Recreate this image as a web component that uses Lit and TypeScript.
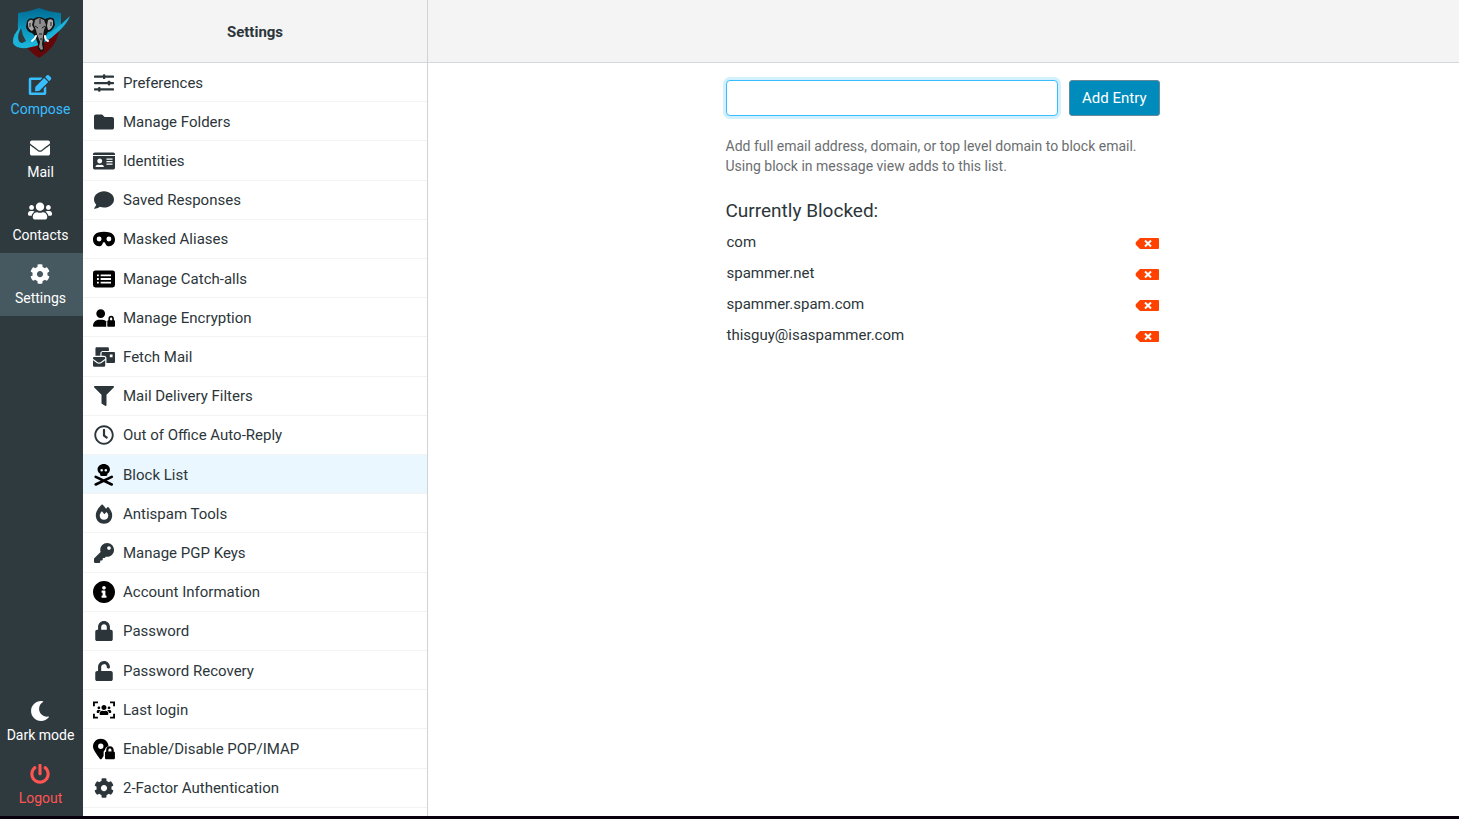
import { LitElement, html, css, svg, SVGTemplateResult } from "lit";
import { customElement, property, state } from "lit/decorators.js";
import { classMap } from "lit/directives/class-map.js";

interface Glyph {
  box: string;
  body: SVGTemplateResult;
}

const solid = (box: string, d: string): Glyph => ({
  box,
  body: svg`<path fill-rule="evenodd" d=${d}></path>`,
});

const COG =
  "M487.4 315.7l-42.6-24.6c4.3-23.2 4.3-47 0-70.2l42.6-24.6c4.9-2.8 7.1-8.6 5.5-14-11.1-35.6-30-67.8-54.7-94.6-3.8-4.1-10-5.1-14.8-2.3L380.8 110c-17.9-15.4-38.5-27.3-60.8-35.1V25.8c0-5.6-3.9-10.5-9.4-11.7-36.7-8.2-74.3-7.8-109.2 0-5.5 1.2-9.4 6.1-9.4 11.7V75c-22.2 7.9-42.8 19.8-60.8 35.1L88.7 85.5c-4.9-2.8-11-1.9-14.8 2.3-24.7 26.7-43.6 58.9-54.7 94.6-1.7 5.4.6 11.2 5.5 14L67.3 221c-4.3 23.2-4.3 47 0 70.2l-42.6 24.6c-4.9 2.8-7.1 8.6-5.5 14 11.1 35.6 30 67.8 54.7 94.6 3.8 4.1 10 5.1 14.8 2.3l42.6-24.6c17.9 15.4 38.5 27.3 60.8 35.1v49.2c0 5.6 3.9 10.5 9.4 11.7 36.7 8.2 74.3 7.8 109.2 0 5.5-1.2 9.4-6.1 9.4-11.7v-49.2c22.2-7.9 42.8-19.8 60.8-35.1l42.6 24.6c4.9 2.8 11 1.9 14.8-2.3 24.7-26.7 43.6-58.9 54.7-94.6 1.5-5.5-.7-11.3-5.6-14.1zM256 336c-44.1 0-80-35.9-80-80s35.9-80 80-80 80 35.9 80 80-35.9 80-80 80z";
const USERS =
  "M96 224c35.3 0 64-28.7 64-64s-28.7-64-64-64-64 28.7-64 64 28.7 64 64 64zm448 0c35.3 0 64-28.7 64-64s-28.7-64-64-64-64 28.7-64 64 28.7 64 64 64zm32 32h-64c-17.6 0-33.5 7.1-45.1 18.6 40.3 22.1 68.9 62 75.1 109.4h66c17.7 0 32-14.3 32-32v-32c0-35.3-28.7-64-64-64zm-256 0c61.9 0 112-50.1 112-112S381.9 32 320 32 208 82.1 208 144s50.1 112 112 112zm76.8 32h-8.3c-20.8 10-43.9 16-68.5 16s-47.6-6-68.5-16h-8.3C179.6 288 128 339.6 128 403.2V432c0 26.5 21.5 48 48 48h288c26.5 0 48-21.5 48-48v-28.8c0-63.6-51.6-115.2-115.2-115.2zm-223.7-13.4C161.5 263.1 145.6 256 128 256H64c-35.3 0-64 28.7-64 64v32c0 17.7 14.3 32 32 32h65.9c6.3-47.4 34.9-87.3 75.2-109.4z";
const LOCK =
  "M400 224h-24v-72C376 68.2 307.8 0 224 0S72 68.2 72 152v72H48c-26.5 0-48 21.5-48 48v192c0 26.5 21.5 48 48 48h352c26.5 0 48-21.5 48-48V272c0-26.5-21.5-48-48-48zm-104 0H152v-72c0-39.7 32.3-72 72-72s72 32.3 72 72v72z";

const GLYPHS: Record<string, Glyph> = {
  compose: solid(
    "0 0 576 512",
    "M402.6 83.2l90.2 90.2c3.8 3.8 3.8 10 0 13.8L274.4 405.6l-92.8 10.3c-12.4 1.4-22.9-9.1-21.5-21.5l10.3-92.8L388.8 83.2c3.8-3.8 10-3.8 13.8 0zm162-22.9l-48.8-48.8c-15.2-15.2-39.9-15.2-55.2 0l-35.4 35.4c-3.8 3.8-3.8 10 0 13.8l90.2 90.2c3.8 3.8 10 3.8 13.8 0l35.4-35.4c15.2-15.3 15.2-40 0-55.2zM384 346.2V448H64V128h229.8c3.2 0 6.2-1.3 8.5-3.5l40-40c7.6-7.6 2.2-20.5-8.5-20.5H48C21.5 64 0 85.5 0 112v352c0 26.5 21.5 48 48 48h352c26.5 0 48-21.5 48-48V306.2c0-10.7-12.9-16-20.5-8.5l-40 40c-2.2 2.3-3.5 5.3-3.5 8.5z"
  ),
  mail: solid(
    "0 0 512 512",
    "M502.3 190.8c3.9-3.1 9.7-.2 9.7 4.7V400c0 26.5-21.5 48-48 48H48c-26.5 0-48-21.5-48-48V195.6c0-5 5.7-7.8 9.7-4.7 22.4 17.4 52.1 39.5 154.1 113.6 21.1 15.4 56.7 47.8 92.2 47.6 35.7.3 72-32.8 92.3-47.6 102-74.1 131.6-96.3 154-113.7zM256 320c23.2.4 56.6-29.2 73.4-41.4 132.7-96.3 142.8-104.7 173.4-128.7 5.8-4.5 9.2-11.5 9.2-18.9v-19c0-26.5-21.5-48-48-48H48c-26.5 0-48 21.5-48 48v19c0 7.4 3.4 14.3 9.2 18.9 30.6 23.9 40.7 32.4 173.4 128.7 16.8 12.2 50.2 41.8 73.4 41.4z"
  ),
  contacts: solid("0 0 640 512", USERS),
  cog: solid("0 0 512 512", COG),
  moon: solid(
    "0 0 512 512",
    "M283.211 512c78.962 0 151.079-35.925 198.857-94.792 7.068-8.708-.639-21.43-11.562-19.35-124.203 23.654-238.262-71.576-238.262-196.954 0-72.222 38.662-138.635 101.498-174.394 9.686-5.512 7.25-20.197-3.756-22.23A258.156 258.156 0 0 0 283.211 0c-141.309 0-256 114.511-256 256 0 141.309 114.511 256 256 256z"
  ),
  power: solid(
    "0 0 512 512",
    "M400 54.1c63 45 104 118.6 104 201.9 0 136.8-110.8 247.7-247.5 248C120 504.3 8.2 393 8 256.4 7.9 173.1 48.9 99.3 111.8 54.2c11.7-8.3 28-4.8 35 7.7L162.6 90c5.9 10.5 3.1 23.8-6.6 31-41.5 30.8-68 79.6-68 134.9-.1 92.3 74.5 168.1 168 168.1 91.6 0 168.6-74.2 168-169.1-.3-51.8-24.7-101.8-68.1-134-9.7-7.2-12.4-20.5-6.5-30.9l15.8-28.1c7-12.4 23.2-16.1 34.8-7.8zM296 264V24c0-13.3-10.7-24-24-24h-32c-13.3 0-24 10.7-24 24v240c0 13.3 10.7 24 24 24h32c13.3 0 24-10.7 24-24z"
  ),
  sliders: {
    box: "0 0 512 512",
    body: svg`<rect y="66" width="512" height="58" rx="16"></rect><rect y="228" width="512" height="58" rx="16"></rect><rect y="390" width="512" height="58" rx="16"></rect>
      <rect x="230" y="34" width="58" height="122" rx="18"></rect><rect x="356" y="196" width="58" height="122" rx="18"></rect><rect x="106" y="358" width="58" height="122" rx="18"></rect>`,
  },
  folder: solid(
    "0 0 512 512",
    "M464 128H272l-64-64H48C21.49 64 0 85.49 0 112v288c0 26.51 21.49 48 48 48h416c26.51 0 48-21.49 48-48V176c0-26.51-21.49-48-48-48z"
  ),
  card: solid(
    "0 0 576 512",
    "M528 32H48C21.5 32 0 53.5 0 80v16h576V80c0-26.5-21.5-48-48-48zM0 432c0 26.5 21.5 48 48 48h480c26.5 0 48-21.5 48-48V128H0v304zM352 192h160v32H352zM352 256h160v32H352zM352 320h160v32H352zM176 192c35.3 0 64 28.7 64 64s-28.7 64-64 64-64-28.7-64-64 28.7-64 64-64zM67.1 396.2C75.5 370.5 99.6 352 128 352h8.2c12.3 5.1 25.7 8 39.8 8s27.6-2.9 39.8-8h8.2c28.4 0 52.5 18.5 60.9 44.2 3.2 9.9-5.2 19.8-15.6 19.8H82.7c-10.4 0-18.8-10-15.6-19.8z"
  ),
  comment: solid(
    "0 0 512 512",
    "M256 32C114.6 32 0 125.1 0 240c0 49.6 21.4 95 57 130.7C44.5 421.1 2.7 466 2.2 466.5c-2.2 2.3-2.8 5.7-1.5 8.7S4.8 480 8 480c66.3 0 116-31.8 140.6-51.4 32.7 12.3 69 19.4 107.4 19.4 141.4 0 256-93.1 256-208S397.4 32 256 32z"
  ),
  mask: solid(
    "0 0 576 512",
    "M288 64C39 64 0 182 0 272c0 100 64 176 160 176 44 0 70-22 88-62 14-30 24-42 40-42s26 12 40 42c18 40 44 62 88 62 96 0 160-76 160-176C576 182 537 64 288 64zM160 192a64 64 0 1 1 0 128 64 64 0 1 1 0-128zM416 192a64 64 0 1 1 0 128 64 64 0 1 1 0-128z"
  ),
  list: solid(
    "0 0 576 512",
    "M64 32h448a64 64 0 0 1 64 64v320a64 64 0 0 1-64 64H64a64 64 0 0 1-64-64V96a64 64 0 0 1 64-64zM104 136v48h48v-48zM104 232v48h48v-48zM104 328v48h48v-48zM200 136v48h272v-48zM200 232v48h272v-48zM200 328v48h272v-48z"
  ),
  userlock: solid(
    "0 0 640 512",
    "M224 0a128 128 0 1 1 0 256 128 128 0 1 1 0-256zM178 304h92c50 0 96 22 128 56-9 10-14 22-14 36v96c0 7 1 14 4 20H30c-17 0-30-13-30-30 0-98 80-178 178-178zM528 192c48 0 80 36 80 80v48c18 0 32 14 32 32v128c0 18-14 32-32 32H448c-18 0-32-14-32-32V352c0-18 14-32 32-32v-48c0-44 32-80 80-80zm0 48c-20 0-32 14-32 32v48h64v-48c0-18-12-32-32-32z"
  ),
  bulk: solid(
    "0 0 576 512",
    "M96 0h288c18 0 32 14 32 32v64H256c-35 0-60 24-64 64v64H64V32C64 14 78 0 96 0zM256 128h288c18 0 32 14 32 32v224c0 18-14 32-32 32H352V288c0-35-24-64-64-64h-64v-64c0-18 14-32 32-32zm184 64v72h72v-72zM32 256h256c18 0 32 14 32 32v14c-50 34-80 60-112 84-30 22-66 22-96 0C80 362 50 336 0 302v-14c0-18 14-32 32-32zM0 340c40 28 66 48 96 70 38 28 90 28 128 0 30-22 56-42 96-70v140c0 18-14 32-32 32H32c-18 0-32-14-32-32z"
  ),
  filter: solid(
    "0 0 512 512",
    "M487.976 0H24.028C2.71 0-8.047 25.866 7.058 40.971L192 225.941V432c0 7.831 3.821 15.17 10.237 19.662l80 55.98C298.02 518.69 320 507.493 320 487.98V225.941l184.947-184.97C520.021 25.896 509.338 0 487.976 0z"
  ),
  clock: solid(
    "0 0 512 512",
    "M256 8C119 8 8 119 8 256s111 248 248 248 248-111 248-248S393 8 256 8zm0 448c-110.5 0-200-89.5-200-200S145.5 56 256 56s200 89.5 200 200-89.5 200-200 200zm61.8-104.4l-84.9-61.7c-3.1-2.3-4.9-5.9-4.9-9.7V116c0-6.6 5.4-12 12-12h32c6.6 0 12 5.4 12 12v141.7l66.8 48.6c5.4 3.9 6.5 11.4 2.6 16.8L334.6 349c-3.9 5.3-11.4 6.5-16.8 2.6z"
  ),
  skull: {
    box: "0 0 448 512",
    body: svg`<path fill-rule="evenodd" d="M218 0c80 0 144 56 144 126 0 42-24 78-60 100v24c0 16-12 28-28 28H162c-16 0-28-12-28-28v-24c-36-22-60-58-60-100C74 56 138 0 218 0zM170 116a30 30 0 1 0 0 60 30 30 0 1 0 0-60zM266 116a30 30 0 1 0 0 60 30 30 0 1 0 0-60z"></path>
      <path fill="none" stroke="currentColor" stroke-width="62" stroke-linecap="round" d="M32 300L404 476M404 300L32 476"></path>`,
  },
  fire: {
    box: "0 0 448 512",
    body: svg`<path fill-rule="evenodd" d="M176 8c-80 72-162 176-162 278 0 130 94 218 210 218s210-88 210-218c0-74-52-160-106-214-22 16-38 34-52 52C244 80 210 38 176 8zM172 186c22 24 42 50 58 78l58-62c30 30 46 62 46 92 0 66-46 112-110 112s-110-46-110-112c0-34 22-70 58-108z"></path>`,
  },
  key: solid(
    "0 0 512 512",
    "M512 176.001C512 273.203 433.202 352 336 352c-11.22 0-22.19-1.062-32.827-3.069l-24.012 27.014A23.999 23.999 0 0 1 261.223 384H224v40c0 13.255-10.745 24-24 24h-40v40c0 13.255-10.745 24-24 24H24c-13.255 0-24-10.745-24-24v-78.059c0-6.365 2.529-12.47 7.029-16.971l161.802-161.802C163.108 213.814 160 195.271 160 176 160 78.798 238.797.001 335.999 0 433.488-.001 512 78.511 512 176.001zM336 128c0 26.51 21.49 48 48 48s48-21.49 48-48-21.49-48-48-48-48 21.49-48 48z"
  ),
  info: solid(
    "8 8 496 496",
    "M256 8C119.043 8 8 119.083 8 256c0 136.997 111.043 248 248 248s248-111.003 248-248C504 119.083 392.957 8 256 8zm0 110c23.196 0 42 18.804 42 42s-18.804 42-42 42-42-18.804-42-42 18.804-42 42-42zm56 254c0 6.627-5.373 12-12 12h-88c-6.627 0-12-5.373-12-12v-24c0-6.627 5.373-12 12-12h12v-64h-12c-6.627 0-12-5.373-12-12v-24c0-6.627 5.373-12 12-12h64c6.627 0 12 5.373 12 12v100h12c6.627 0 12 5.373 12 12v24z"
  ),
  lock: solid("0 0 448 512", LOCK),
  unlock: solid(
    "0 0 448 512",
    "M400 256H152V152.9c0-39.6 31.7-72.5 71.3-72.9 40-.4 72.7 32.1 72.7 72v16c0 13.3 10.7 24 24 24h32c13.3 0 24-10.7 24-24v-16C376 68 307.5-.3 223.5 0 139.5.3 72 69.5 72 153.5V256H48c-26.5 0-48 21.5-48 48v160c0 26.5 21.5 48 48 48h352c26.5 0 48-21.5 48-48V304c0-26.5-21.5-48-48-48z"
  ),
  viewfinder: {
    box: "0 0 640 512",
    body: svg`<path fill="none" stroke="currentColor" stroke-width="54" d="M27 144V36H144M496 36H613V144M613 368V476H496M144 476H27V368"></path>
      <path transform="translate(108 88) scale(.66)" d=${USERS}></path>`,
  },
  pinlock: {
    box: "0 0 544 512",
    body: svg`<path fill-rule="evenodd" d="M192 0c106 0 192 86 192 190-46 8-82 44-88 90-22 14-34 34-34 60v92c-18 26-32 46-44 62-12 18-38 18-50 0C74 356 0 272 0 192 0 86 86 0 192 0zm0 122a66 66 0 1 0 0 132 66 66 0 1 0 0-132z"></path>
      <path fill-rule="evenodd" d="M418 190c54 0 94 42 94 92v38c18 2 30 14 30 32v128c0 18-14 32-32 32H328c-18 0-32-14-32-32V352c0-18 12-30 30-32v-38c0-50 38-92 92-92zm0 56c-22 0-38 16-38 38v36h76v-36c0-22-16-38-38-38z"></path>`,
  },
};

@customElement("ui-icon")
class UiIcon extends LitElement {
  static styles = css`
    :host {
      display: block;
    }
    svg {
      display: block;
      width: 100%;
      height: 100%;
      fill: currentColor;
    }
  `;
  @property() name = "";
  render() {
    const g = GLYPHS[this.name];
    return html`<svg viewBox=${g.box} aria-hidden="true">${g.body}</svg>`;
  }
}

@customElement("brand-logo")
class BrandLogo extends LitElement {
  static styles = css`
    :host,
    svg {
      display: block;
    }
  `;
  render() {
    return html`<svg width="60" height="54" viewBox="0 0 60 54" role="img" aria-label="Webmail">
      <defs>
        <linearGradient id="sky" x1="0" y1="0" x2="0" y2="1">
          <stop offset="0" stop-color="#006d96"></stop>
          <stop offset="1" stop-color="#18b7dd"></stop>
        </linearGradient>
      </defs>
      <path fill="url(#sky)" d="M8 7Q19 6 29 2Q39 6 51 7V21L43 30L31 38L16 42L10 32Q7 24 8 15Z"></path>
      <path fill="#650708" d="M49 23Q48 40 29 52Q21 47 17 41Q34 38 49 23Z"></path>
      <path
        fill="#1ab4da"
        fill-rule="evenodd"
        d="M11 20Q2 29 3 37Q5 43 17 42Q34 40 48 26Q57 18 60 10Q52 18 43 25Q30 36 17 37Q11 38 9 35Q7 29 11 20Z"
      ></path>
      <path fill="#2f3a3f" d="M11 22Q7 30 9 35Q11 38 16 35Q12 29 11 22Z"></path>
      <path
        fill="#141414"
        d="M23 13Q29 9 35 13Q41 10 44 13L45 19Q42 26 38 26L35 31L34 38L34 44L31 46L28 43L28 38L25 30L22 27Q17 26 16 21L17 15Q20 11 23 13Z"
      ></path>
      <path fill="#a8a8a8" d="M18 16Q21 12 23 15L22 19L24 23L22 25Q18 23 18 19ZM38 14Q42 12 43 15L43 19Q41 24 38 24L37 20Z"></path>
      <path fill="#8c8c8c" d="M25 14L29 12L34 14L36 19L34 24L33 30L32 38L33 43L31 44L29 41L30 36L27 28L26 24L24 19Z"></path>
      <path fill="none" stroke="#1c1c1c" stroke-width="1" d="M25 20L28 22M35 20L32 22M30 13V18M29 28H32M30 33H32M20 17V21M41 16V20"></path>
      <path fill="none" stroke="#fff" stroke-width="2" stroke-linecap="round" d="M26 30Q25 33 22 35M35 30Q35 34 38 35"></path>
    </svg>`;
  }
}

const TASKS = [
  ["compose", "Compose"],
  ["mail", "Mail"],
  ["contacts", "Contacts"],
  ["cog", "Settings"],
];

// icon, label, uses the heavy plugin artwork
const SECTIONS: [string, string, boolean][] = [
  ["sliders", "Preferences", false],
  ["folder", "Manage Folders", false],
  ["card", "Identities", false],
  ["comment", "Saved Responses", false],
  ["mask", "Masked Aliases", true],
  ["list", "Manage Catch-alls", true],
  ["userlock", "Manage Encryption", true],
  ["bulk", "Fetch Mail", false],
  ["filter", "Mail Delivery Filters", false],
  ["clock", "Out of Office Auto-Reply", false],
  ["skull", "Block List", true],
  ["fire", "Antispam Tools", false],
  ["key", "Manage PGP Keys", false],
  ["info", "Account Information", true],
  ["lock", "Password", false],
  ["unlock", "Password Recovery", false],
  ["viewfinder", "Last login", true],
  ["pinlock", "Enable/Disable POP/IMAP", true],
  ["cog", "2-Factor Authentication", false],
];
const WIDE = ["mask", "list", "userlock", "info", "skull", "viewfinder", "pinlock", "card", "bulk"];

@customElement("app-root")
class AppRoot extends LitElement {
  static styles = css`
    :host {
      display: flex;
      box-sizing: border-box;
      height: 100vh;
      border-bottom: 3px solid #08000d;
      font: 15px/22px Roboto, sans-serif;
      color: #2c363a;
      background: #fff;
    }
    a {
      color: inherit;
      text-decoration: none;
    }
    .tasks {
      flex: none;
      display: flex;
      flex-direction: column;
      width: 83px;
      background: #2f3a3f;
      color: #fff;
      font-size: 14px;
      line-height: 20px;
    }
    .logo {
      display: flex;
      justify-content: center;
      padding: 6px 4px 4px 0;
    }
    .task {
      display: flex;
      flex-direction: column;
      align-items: center;
      gap: 4px;
      box-sizing: border-box;
      height: 63px;
      padding: 11px 2px 0 0;
    }
    .task ui-icon {
      width: 24px;
      height: 20px;
      margin-right: 1px;
    }
    .compose {
      color: #37beff;
    }
    .current {
      background: #475960;
    }
    .spacer {
      flex: 1;
    }
    .logout {
      color: #ff5552;
    }
    .sections {
      flex: none;
      display: flex;
      flex-direction: column;
      width: 344px;
      border-right: 1px solid #ced4d6;
    }
    .bar {
      flex: none;
      box-sizing: border-box;
      height: 63px;
      background: #f4f4f4;
      border-bottom: 1px solid #d0d8db;
    }
    .title {
      margin: 0;
      font-size: 15px;
      line-height: 64px;
      font-weight: 700;
      text-align: center;
    }
    .list {
      flex: 1;
      min-height: 0;
      overflow: hidden;
      display: flex;
      flex-direction: column;
      margin: 0;
      padding: 0 0 8px;
      list-style: none;
    }
    .row {
      flex: 1 0 auto;
      display: flex;
      border-bottom: 1px solid #f1f3f4;
    }
    .row a {
      flex: 1;
      display: flex;
      align-items: center;
      gap: 8px;
      padding: 8px 10px 7px;
    }
    .row ui-icon {
      box-sizing: border-box;
      width: 22px;
      height: 22px;
      padding: 1px;
    }
    .row .wide {
      padding: 0;
    }
    .heavy {
      color: #000;
    }
    .selected {
      background: #eaf7fe;
    }
    .content {
      flex: 1;
      min-width: 0;
    }
    .panel {
      box-sizing: border-box;
      width: 436px;
      max-width: 100%;
      margin: 17px auto 0;
      padding-right: 2px;
    }
    .entry {
      display: flex;
      gap: 11px;
    }
    .field {
      flex: 1;
      min-width: 0;
      box-sizing: border-box;
      height: 36px;
      padding: 0 8px;
      font: inherit;
      color: inherit;
      background: #fff;
      border: 1px solid #37beff;
      border-radius: 4px;
      outline: none;
      box-shadow: 0 0 0 3px #d3f0ff;
    }
    .add {
      height: 36px;
      box-sizing: border-box;
      padding: 0 12px;
      font: inherit;
      color: #fff;
      background: #008bbd;
      border: 1px solid #66899a;
      border-radius: 3px;
    }
    .hint {
      margin: 20px 0 0;
      font-size: 14px;
      line-height: 20px;
      color: #6b6e70;
    }
    .heading {
      margin: 23px 0 8px;
      font-size: 19px;
      line-height: 24px;
      font-weight: 400;
    }
    .blocked {
      display: grid;
      gap: 9px;
      margin: 0;
      padding: 0 1px;
      list-style: none;
    }
    .blocked li {
      display: flex;
      justify-content: space-between;
      align-items: center;
    }
    .remove {
      padding: 3px 0 0;
      border: 0;
      background: none;
    }
    .remove svg {
      display: block;
    }
  `;

  @state() private blocked = ["com", "spammer.net", "spammer.spam.com", "thisguy@isaspammer.com"];

  private add() {
    const field = this.renderRoot.querySelector<HTMLInputElement>(".field")!;
    const value = field.value.trim();
    if (value) this.blocked = [...this.blocked, value];
    field.value = "";
  }

  private remove(entry: string) {
    this.blocked = this.blocked.filter((e) => e !== entry);
  }

  render() {
    return html`
      <nav class="tasks" aria-label="Tasks">
        <div class="logo"><brand-logo></brand-logo></div>
        ${TASKS.map(
          ([icon, label]) => html`<a
            href="#"
            class=${classMap({ task: true, compose: icon === "compose", current: icon === "cog" })}
            ><ui-icon name=${icon}></ui-icon><span>${label}</span></a
          >`
        )}
        <div class="spacer"></div>
        <a href="#" class="task"><ui-icon name="moon"></ui-icon><span>Dark mode</span></a>
        <a href="#" class="task logout"><ui-icon name="power"></ui-icon><span>Logout</span></a>
      </nav>
      <section class="sections">
        <header class="bar"><h1 class="title">Settings</h1></header>
        <ul class="list">
          ${SECTIONS.map(
            ([icon, label, heavy]) => html`<li class=${classMap({ row: true, selected: icon === "skull" })}>
              <a href="#"
                ><ui-icon class=${classMap({ heavy, wide: WIDE.includes(icon) })} name=${icon}></ui-icon
                ><span>${label}</span></a
              >
            </li>`
          )}
        </ul>
      </section>
      <main class="content">
        <div class="bar"></div>
        <div class="panel">
          <div class="entry">
            <input class="field" type="text" aria-label="Address or domain to block" />
            <button class="add" type="button" @click=${this.add}>Add Entry</button>
          </div>
          <p class="hint">
            Add full email address, domain, or top level domain to block email.<br />Using block in message view adds
            to this list.
          </p>
          <h2 class="heading">Currently Blocked:</h2>
          <ul class="blocked">
            ${this.blocked.map(
              (entry) => html`<li>
                <span>${entry}</span>
                <button class="remove" type="button" aria-label="Remove ${entry}" @click=${() => this.remove(entry)}>
                  <svg width="24" height="11" viewBox="0 0 24 11">
                    <path fill="#ff4200" d="M5 0H23Q24 0 24 1V10Q24 11 23 11H5L1 7Q0 5.500 1 4Z"></path>
                    <path stroke="#fff" stroke-width="2" d="M10 2.500L16 8.500M16 2.500L10 8.500"></path>
                  </svg>
                </button>
              </li>`
            )}
          </ul>
        </div>
      </main>
    `;
  }
}
